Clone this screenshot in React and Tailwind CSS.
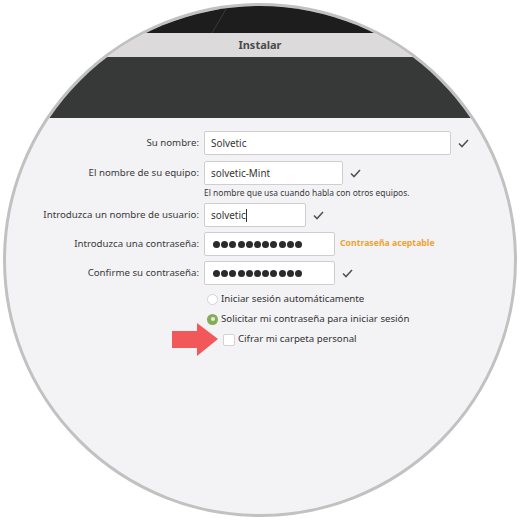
import React from 'react';

const font = { fontFamily: '"Noto Sans", "Open Sans", sans-serif' };

const Check = ({ className = '' }) => (
  <svg width="11" height="9" viewBox="0 0 11 9" className={className}>
    <polyline points="1,4.5 4,7.5 10,1" fill="none" stroke="#555" strokeWidth="1.6" />
  </svg>
);

const Dots = () => (
  <div className="flex gap-[1.2px] pl-[8px]">
    {Array.from({ length: 11 }).map((_, i) => (
      <span key={i} className="w-[7px] h-[7px] rounded-full bg-[#2b2b2b]" />
    ))}
  </div>
);

const Field = ({ label, width, children, after }) => (
  <div className="flex items-center h-6">
    <div className="w-[193px] shrink-0 text-right text-[9.7px] text-[#3a3a3a]">{label}</div>
    <div
      className="ml-[5px] h-6 shrink-0 flex items-center bg-white border border-[#cfcdcf] rounded-[2px] text-[9.9px] text-[#333]"
      style={{ width }}
    >
      {children}
    </div>
    {after}
  </div>
);

export default function App() {
  return (
    <div className="w-[520px] h-[520px] bg-white p-[3px]" style={font}>
      <div className="w-[514px] h-[514px] rounded-full overflow-hidden border-[3px] border-[#c1c1c1] flex flex-col bg-[#f3f2f5]">
        <div className="h-[27px] bg-[#1d1d1d] shrink-0">
          <svg width="508" height="27">
            <line x1="222" y1="0" x2="206" y2="27" stroke="#3a3a3a" strokeWidth="1" />
          </svg>
        </div>
        <div className="h-6 bg-[#dcdadb] flex items-center justify-center shrink-0 text-[11px] font-bold text-[#4a4a4a]">
          Instalar
        </div>
        <div className="h-[61px] bg-[#373938] shrink-0" />

        <div className="flex flex-col pt-[13px]">
          <Field label="Su nombre:" width={247} after={<Check className="ml-[7px]" />}>
            <span className="pl-[6px]">Solvetic</span>
          </Field>
          <div className="mt-[6px]">
            <Field label="El nombre de su equipo:" width={139} after={<Check className="ml-[7px]" />}>
              <span className="pl-[6px]">solvetic-Mint</span>
            </Field>
          </div>
          <div className="ml-[198px] mt-[1px] mb-[3px] h-[14px] leading-[14px] text-[8.45px] text-[#3a3a3a]">
            El nombre que usa cuando habla con otros equipos.
          </div>
          <Field label="Introduzca un nombre de usuario:" width={102} after={<Check className="ml-[7px]" />}>
            <span className="pl-[6px]">solvetic</span>
            <span className="w-px h-[13px] bg-[#333]" />
          </Field>
          <div className="mt-[5px]">
            <Field
              label="Introduzca una contraseña:"
              width={131}
              after={<span className="ml-[5px] text-[8.7px] font-bold text-[#eea233]">Contraseña aceptable</span>}
            >
              <Dots />
            </Field>
          </div>
          <div className="mt-[5px]">
            <Field label="Confirme su contraseña:" width={131} after={<Check className="ml-[7px]" />}>
              <Dots />
            </Field>
          </div>

          <div className="ml-[201px] mt-[7px] h-[14px] flex items-center gap-[3px] text-[9.7px] text-[#333]">
            <span className="w-[11px] h-[11px] rounded-full bg-white border border-[#d4d2d4]" />
            <span>Iniciar sesión automáticamente</span>
          </div>
          <div className="ml-[201px] mt-[6px] h-[14px] flex items-center gap-[3px] text-[9.7px] text-[#333]">
            <span className="w-[11px] h-[11px] rounded-full bg-[#86ab5b] flex items-center justify-center">
              <span className="w-[4px] h-[4px] rounded-full bg-[#e6efd9]" />
            </span>
            <span>Solicitar mi contraseña para iniciar sesión</span>
          </div>
          <div className="ml-[166px] -mt-[3px] h-[33px] flex items-center text-[9.7px] text-[#333]">
            <svg width="46" height="33" viewBox="0 0 46 33">
              <polygon points="0,8 25,8 25,0 46,16 25,33 25,25 0,25" fill="#f2585a" />
            </svg>
            <span className="ml-[5px] w-[12px] h-[12px] rounded-[2px] bg-white border border-[#d4d2d4]" />
            <span className="ml-[3px]">Cifrar mi carpeta personal</span>
          </div>
        </div>
      </div>
    </div>
  );
}
